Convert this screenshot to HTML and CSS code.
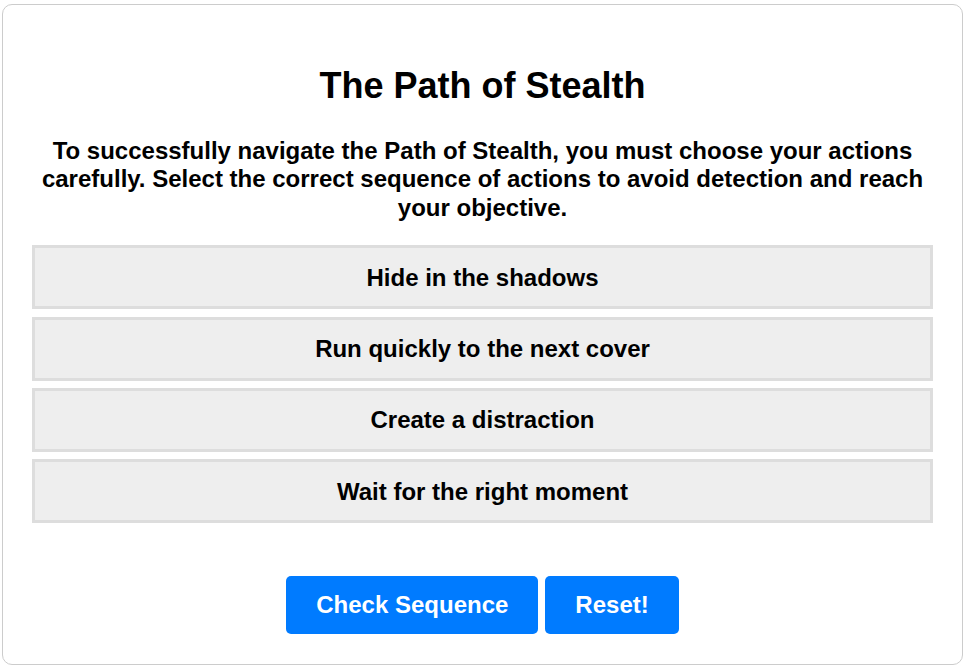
FILE: index.html
```html
<!DOCTYPE html>
<html>
<head>
<meta charset="utf-8">
<link rel="stylesheet" href="styles.css">
</head>
<body>
<div class="card">
  <h1 class="title">The Path of Stealth</h1>
  <p class="intro">To successfully navigate the Path of Stealth, you must choose your actions carefully. Select the correct sequence of actions to avoid detection and reach your objective.</p>
  <div class="options">
    <div class="option">Hide in the shadows</div>
    <div class="option">Run quickly to the next cover</div>
    <div class="option">Create a distraction</div>
    <div class="option">Wait for the right moment</div>
  </div>
  <div class="actions">
    <button class="btn">Check Sequence</button>
    <button class="btn">Reset!</button>
  </div>
</div>
</body>
</html>
```
FILE: styles.css
```css
html, body {
  margin: 0;
  background: #fff;
}
body {
  padding: 4px 4px 0 2px;
  font-family: "Liberation Sans", Arial, sans-serif;
  color: #000;
}
.card {
  box-sizing: border-box;
  height: 661px;
  border: 1px solid #ccc;
  border-radius: 10px;
  padding: 0 29px;
  text-align: center;
}
.title {
  margin: 60px 0 0;
  font-size: 36px;
  line-height: 42px;
  font-weight: bold;
}
.intro {
  margin: 30px 0 0;
  font-size: 24px;
  line-height: 28.4px;
  font-weight: bold;
}
.options {
  margin-top: 23px;
  display: flex;
  flex-direction: column;
  gap: 7.33px;
}
.option {
  background: #eee;
  border: 3px solid #ddd;
  padding: 15.5px 0;
  font-size: 24px;
  line-height: 27px;
  font-weight: bold;
}
.actions {
  margin-top: 53px;
  display: flex;
  justify-content: center;
  gap: 7px;
}
.btn {
  background: #007bff;
  color: #fff;
  border: none;
  border-radius: 5px;
  font-family: "Liberation Sans", Arial, sans-serif;
  font-size: 24px;
  font-weight: bold;
  height: 58px;
  padding: 0 30px;
}
```
